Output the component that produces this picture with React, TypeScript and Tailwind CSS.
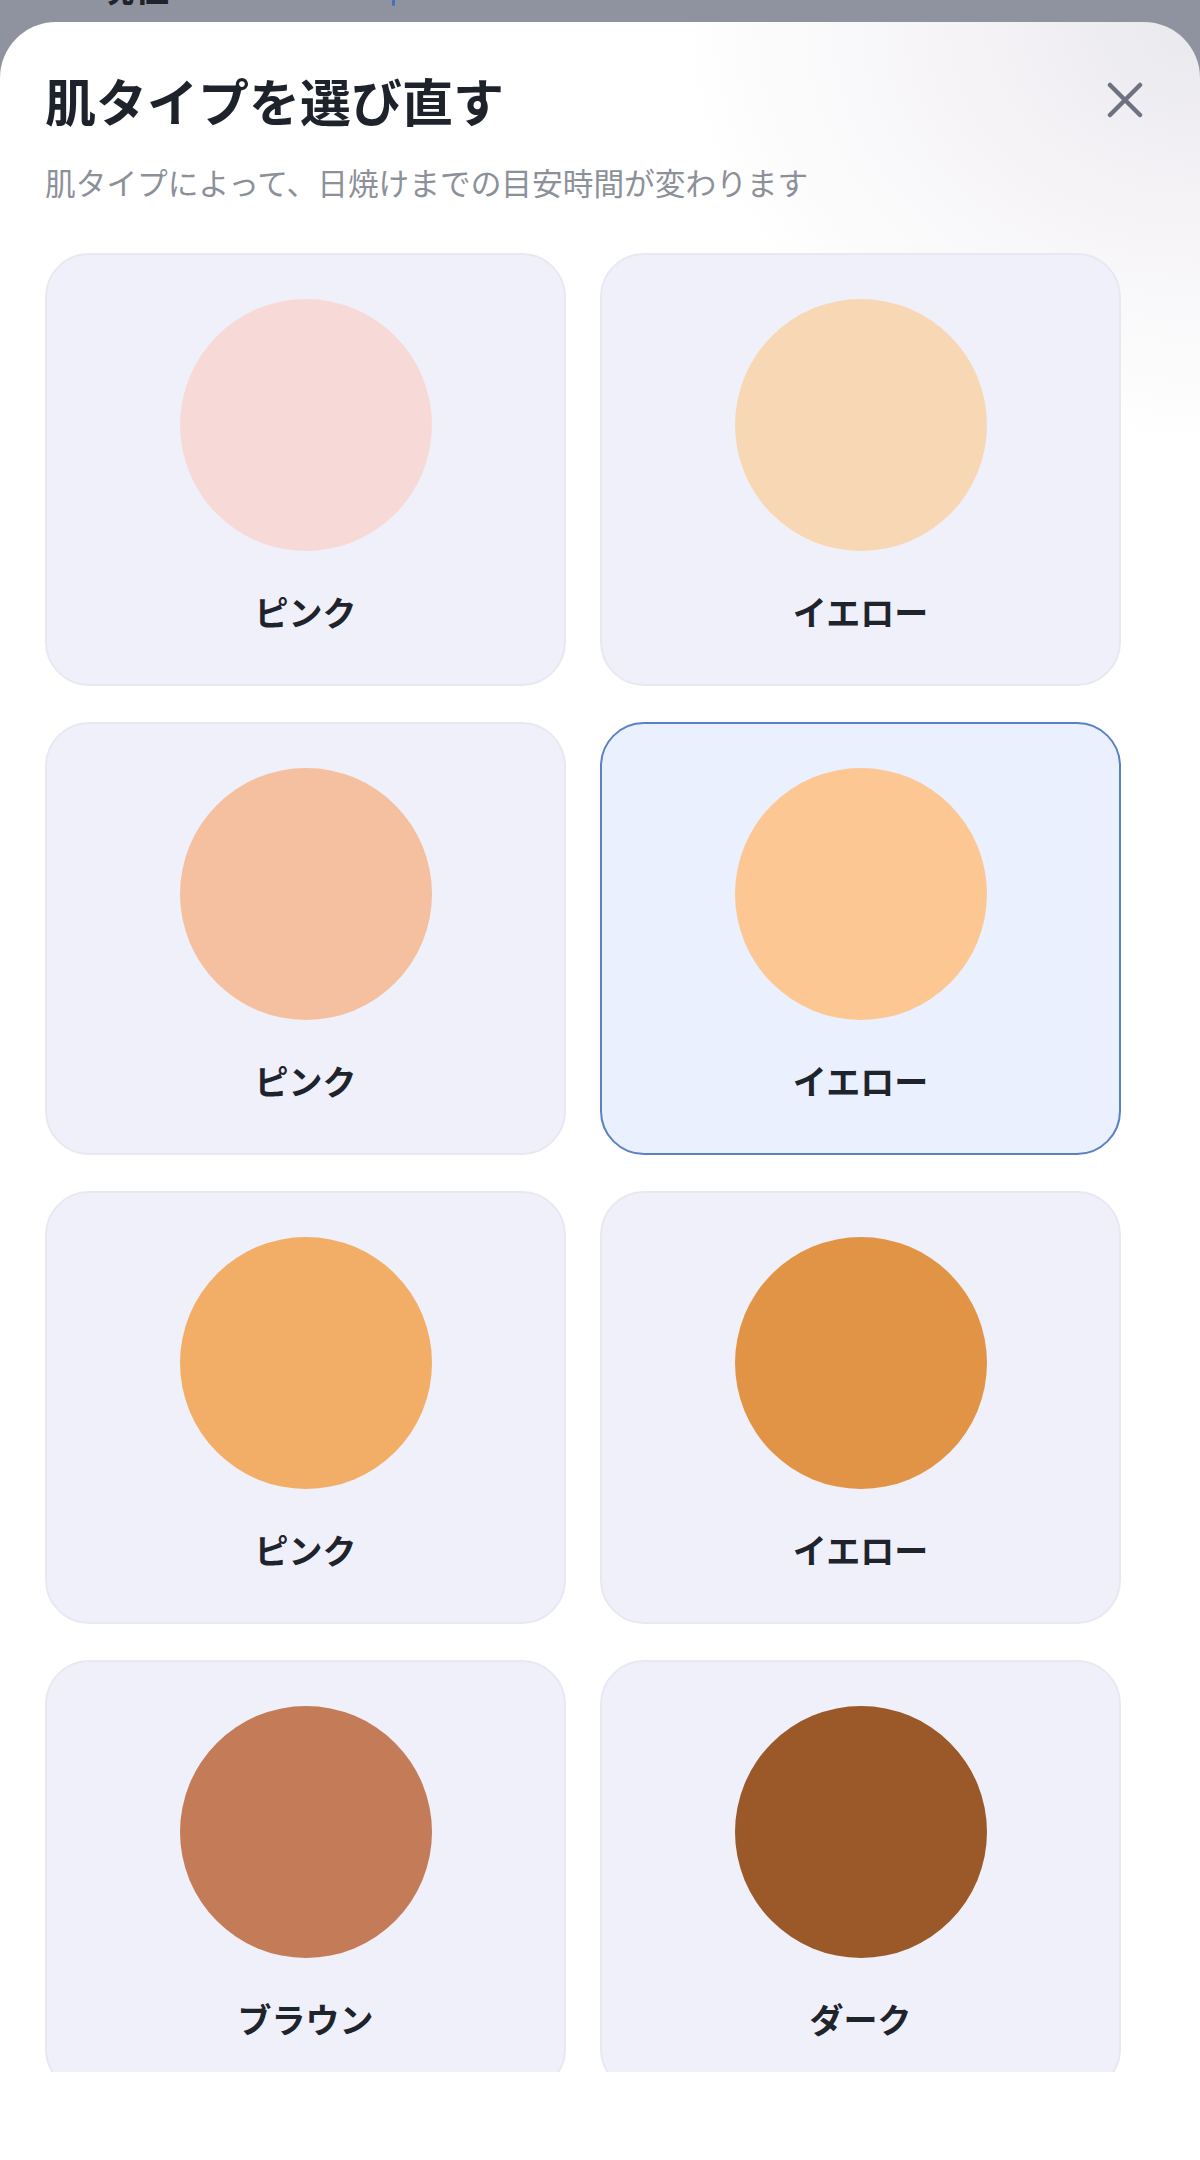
import { useState } from "react";

type SkinType = {
  id: number;
  label: string;
  color: string;
};

const skinTypes: SkinType[] = [
  { id: 1, label: "ピンク", color: "#f7dad8" },
  { id: 2, label: "イエロー", color: "#f8d7b5" },
  { id: 3, label: "ピンク", color: "#f4c09f" },
  { id: 4, label: "イエロー", color: "#fdc794" },
  { id: 5, label: "ピンク", color: "#f2ad66" },
  { id: 6, label: "イエロー", color: "#e19446" },
  { id: 7, label: "ブラウン", color: "#c47b57" },
  { id: 8, label: "ダーク", color: "#9b5828" },
];

const font = { fontFamily: '"Noto Sans CJK JP", "Noto Sans", sans-serif' };

function CloseIcon() {
  return (
    <svg width="36" height="36" viewBox="0 0 36 36" fill="none">
      <path
        d="M3 3L33 33M33 3L3 33"
        stroke="#6e7280"
        strokeWidth="4.5"
        strokeLinecap="round"
      />
    </svg>
  );
}

function SkinCard({
  item,
  selected,
  onSelect,
}: {
  item: SkinType;
  selected: boolean;
  onSelect: () => void;
}) {
  return (
    <button
      type="button"
      onClick={onSelect}
      className={`h-[433px] rounded-[44px] flex flex-col items-center pt-[44px] ${
        selected
          ? "bg-[#eaf0fd] border-2 border-[#5b80c4]"
          : "bg-[#f0f0fa] border-2 border-[#e8e8f2]"
      }`}
    >
      {/* swatch color comes from data */}
      <div
        className="w-[252px] h-[252px] rounded-full shrink-0"
        style={{ backgroundColor: item.color }}
      />
      <span className="mt-[35px] text-[34px] leading-[51px] font-bold text-[#1f232c]">
        {item.label}
      </span>
    </button>
  );
}

export default function App() {
  const [selected, setSelected] = useState(4);

  return (
    <div
      className="w-[1200px] h-[2160px] bg-[#8f93a0] overflow-hidden flex flex-col"
      style={font}
    >
      {/* page behind the sheet, mostly hidden */}
      <div className="h-[22px] shrink-0 overflow-hidden relative">
        <div className="absolute left-[98px] -top-[34px] text-[36px] font-bold text-[#1f232c] leading-[40px]">
          現在
        </div>
        <div className="absolute left-[392px] top-0 w-[3px] h-[6px] bg-[#4a6fc0] rounded-b" />
      </div>

      <div className="flex-1 rounded-t-[56px] bg-white bg-[radial-gradient(ellipse_520px_420px_at_100%_0%,#e9e8ed_0%,#f5f3f6_45%,#ffffff_100%)] flex flex-col overflow-hidden">
        <div className="pt-[48px] pl-[45px] pr-[58px]">
          <div className="flex items-center justify-between">
            <h2 className="text-[51px] leading-[60px] font-bold text-[#1e222b]">
              肌タイプを選び直す
            </h2>
            <button type="button" className="flex items-center justify-center -mr-[1px]">
              <CloseIcon />
            </button>
          </div>
          <p className="mt-[31px] text-[30.7px] leading-[42px] text-[#8c9099]">
            肌タイプによって、日焼けまでの目安時間が変わります
          </p>
        </div>

        <div className="mt-[50px] h-[1819px] shrink-0 overflow-hidden pl-[45px]">
          <div className="w-[1076px] grid grid-cols-2 gap-x-[34px] gap-y-[36px]">
            {skinTypes.map((item) => (
              <SkinCard
                key={item.id}
                item={item}
                selected={selected === item.id}
                onSelect={() => setSelected(item.id)}
              />
            ))}
          </div>
        </div>

        <div className="flex-1 bg-white" />
      </div>
    </div>
  );
}
